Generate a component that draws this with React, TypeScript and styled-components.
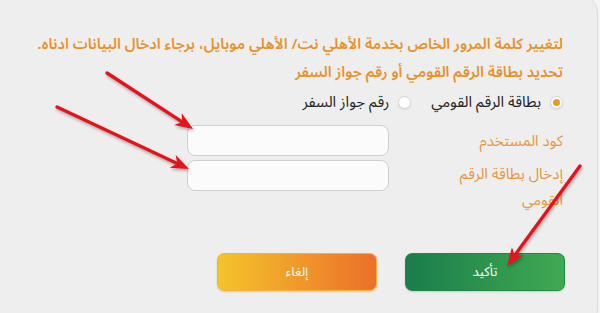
import * as React from "react"
import styled, { createGlobalStyle } from "styled-components"

const GlobalStyle = createGlobalStyle`
  html, body {
    margin: 0;
    padding: 0;
    background: #f4f4f4;
    overflow: hidden;
  }
`

const Page = styled.div`
  position: relative;
  width: 600px;
  height: 313px;
  overflow: hidden;
  font-family: "Noto Sans Arabic", "DejaVu Sans", sans-serif;
`

const Panel = styled.div`
  direction: rtl;
  margin: -4px 2px 0 -20px;
  height: 330px;
  box-sizing: border-box;
  background: #eeeeee;
  border: 1px solid #dcdcdc;
  border-radius: 16px;
  padding: 34px 34px 0 0;
`

const Intro = styled.p`
  margin: 0;
  color: #e8922c;
  font-size: 14.9px;
  font-weight: 600;
  line-height: 28px;
`

const RadioRow = styled.div`
  display: flex;
  align-items: center;
  gap: 20px;
  height: 28px;
  margin-top: 1px;
`

const RadioOption = styled.label`
  display: flex;
  align-items: center;
  gap: 9px;
  color: #222;
  font-size: 15px;
`

const RadioDot = styled.span<{ $checked?: boolean }>`
  width: 11px;
  height: 11px;
  border-radius: 50%;
  background: #fff;
  border: 1px solid #d4d4d4;
  box-shadow: 0 1px 2px rgba(0, 0, 0, 0.08);
  display: flex;
  align-items: center;
  justify-content: center;

  &::after {
    content: "";
    width: 7px;
    height: 7px;
    border-radius: 50%;
    background: ${({ $checked }) => ($checked ? "#ec9a27" : "transparent")};
  }
`

const FormGrid = styled.div`
  display: grid;
  grid-template-columns: 126px 202px;
  column-gap: 48px;
  row-gap: 4px;
  margin-top: 9px;
`

const FieldLabel = styled.label<{ $top?: boolean }>`
  color: #e9963a;
  font-size: 15px;
  line-height: 26px;
  align-self: ${({ $top }) => ($top ? "start" : "center")};
  padding-top: ${({ $top }) => ($top ? "1px" : "0")};
`

const TextInput = styled.input`
  box-sizing: border-box;
  height: 31px;
  width: 202px;
  border: 1px solid #cfcfcf;
  border-radius: 8px;
  background: #fbfbfb;
  outline: none;
  align-self: start;
`

const ButtonRow = styled.div`
  display: flex;
  gap: 28px;
  margin-top: 40px;
  margin-right: -2px;
`

const ActionButton = styled.button<{ $variant: "confirm" | "cancel" }>`
  width: 160px;
  height: 38px;
  border-radius: 7px;
  color: #fff;
  font-family: inherit;
  font-size: 13px;
  cursor: pointer;
  border: 1px solid ${({ $variant }) => ($variant === "confirm" ? "#1f8a47" : "#f5b13a")};
  background: ${({ $variant }) =>
    $variant === "confirm"
      ? "linear-gradient(to left, #3faa52, #1a7d4b)"
      : "linear-gradient(to left, #ec6f2a, #f4c42a)"};
  box-shadow: 0 1px 2px rgba(0, 0, 0, 0.15);
`

const Arrows = styled.svg`
  position: absolute;
  left: 0;
  top: 0;
  width: 600px;
  height: 313px;
  pointer-events: none;
`

const arrows = [
  { x1: 107, y1: 73, x2: 193, y2: 129 },
  { x1: 57, y1: 107, x2: 189, y2: 169 },
  { x1: 580, y1: 166, x2: 507, y2: 266 },
]

function Arrow({ x1, y1, x2, y2 }: { x1: number; y1: number; x2: number; y2: number }) {
  const a = Math.atan2(y2 - y1, x2 - x1)
  const len = 18
  const w = 7
  const bx = x2 - len * Math.cos(a)
  const by = y2 - len * Math.sin(a)
  const px = -Math.sin(a) * w
  const py = Math.cos(a) * w
  const nx = x2 - (len - 5) * Math.cos(a)
  const ny = y2 - (len - 5) * Math.sin(a)
  return (
    <g filter="url(#shadow)">
      <line x1={x1} y1={y1} x2={nx} y2={ny} stroke="#e0161b" strokeWidth={3.4} strokeLinecap="round" />
      <polygon
        points={`${x2},${y2} ${bx + px},${by + py} ${nx},${ny} ${bx - px},${by - py}`}
        fill="#e0161b"
      />
    </g>
  )
}

export default function App() {
  return (
    <>
      <GlobalStyle />
      <Page>
        <Panel>
          <Intro>
            لتغيير كلمة المرور الخاص بخدمة الأهلي نت/ الأهلي موبايل، برجاء ادخال البيانات ادناه.
          </Intro>
          <Intro>تحديد بطاقة الرقم القومي أو رقم جواز السفر</Intro>
          <RadioRow>
            <RadioOption>
              <RadioDot $checked />
              بطاقة الرقم القومي
            </RadioOption>
            <RadioOption>
              <RadioDot />
              رقم جواز السفر
            </RadioOption>
          </RadioRow>
          <FormGrid>
            <FieldLabel>كود المستخدم</FieldLabel>
            <TextInput type="text" />
            <FieldLabel $top>إدخال بطاقة الرقم القومي</FieldLabel>
            <TextInput type="text" />
          </FormGrid>
          <ButtonRow>
            <ActionButton $variant="confirm">تأكيد</ActionButton>
            <ActionButton $variant="cancel">إلغاء</ActionButton>
          </ButtonRow>
        </Panel>
        <Arrows viewBox="0 0 600 313">
          <defs>
            <filter id="shadow" x="-20%" y="-20%" width="140%" height="140%">
              <feDropShadow dx="1" dy="2" stdDeviation="1.5" floodColor="#000" floodOpacity="0.3" />
            </filter>
          </defs>
          {arrows.map((a, i) => (
            <Arrow key={i} {...a} />
          ))}
        </Arrows>
      </Page>
    </>
  )
}
